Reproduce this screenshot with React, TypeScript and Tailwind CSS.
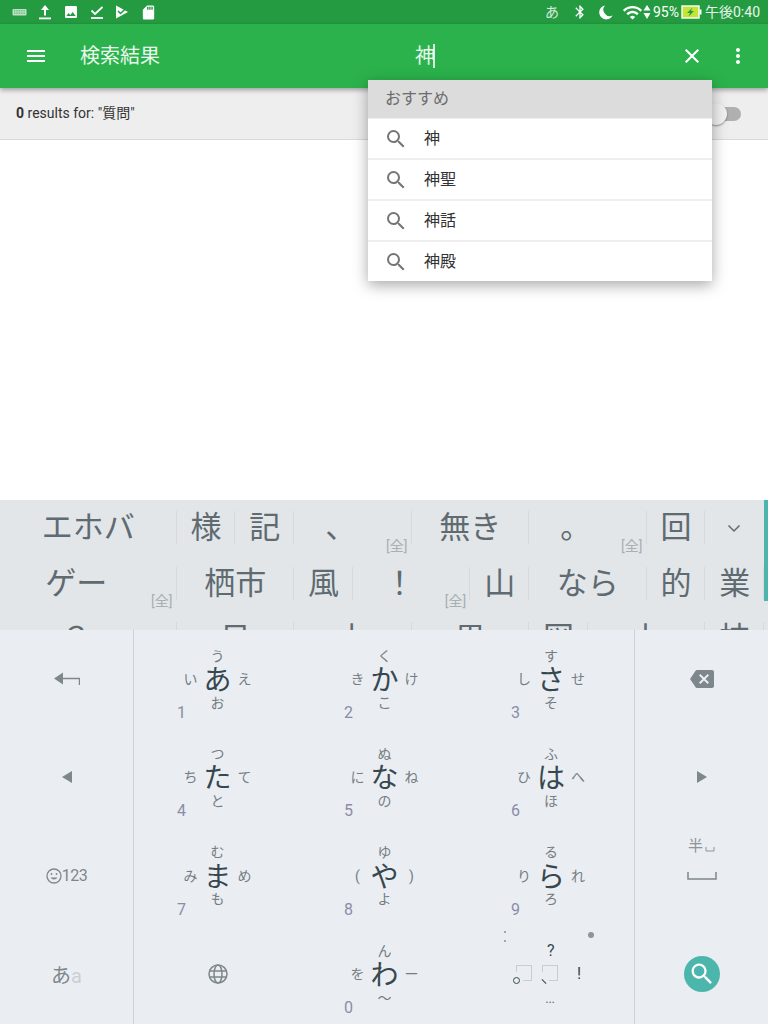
import type { ReactNode } from "react";

const SEARCH =
  "M15.5 14h-.79l-.28-.27A6.471 6.471 0 0 0 16 9.5 6.5 6.5 0 1 0 9.5 16c1.61 0 3.09-.59 4.23-1.57l.27.28v.79l5 4.99L20.49 19l-4.99-5zm-6 0C7.01 14 5 11.99 5 9.5S7.01 5 9.5 5 14 7.01 14 9.5 11.99 14 9.5 14z";

const Icon = ({ d, size, className }: { d: string; size: number; className?: string }) => (
  <svg width={size} height={size} viewBox="0 0 24 24" fill="currentColor" className={className}>
    <path d={d} />
  </svg>
);

const StatusBar = () => (
  <div className="flex h-6 shrink-0 items-center justify-between bg-[#249b41] pl-3 pr-2 text-white">
    <div className="flex items-center gap-[11px]">
      <svg width="15" height="12" viewBox="0 0 15 12" className="text-white/70" fill="currentColor">
        <rect x="0.5" y="3" width="14" height="6.5" rx="1" />
        <path d="M2 4.5h11M2 6h11M2 7.5h11" stroke="#249b41" strokeWidth="0.5" strokeDasharray="1 0.7" />
      </svg>
      <svg width="14" height="16" viewBox="0 0 14 16" fill="currentColor">
        <path d="M7 1 L11 6 H8 V11.5 H6 V6 H3 Z" />
        <rect x="1" y="13.5" width="12" height="1.8" />
      </svg>
      <Icon d="M21 19V5c0-1.1-.9-2-2-2H5c-1.1 0-2 .9-2 2v14c0 1.1.9 2 2 2h14c1.1 0 2-.9 2-2zM8.5 13.5l2.5 3.01L14.5 12l4.5 6H5l3.5-4.5z" size={16} />
      <svg width="14" height="16" viewBox="0 0 14 16" fill="none" stroke="currentColor" strokeWidth="1.8">
        <path d="M1.5 6.5 L5 10 L12.5 3" />
        <path d="M1 14 H13" />
      </svg>
      <svg width="14" height="16" viewBox="0 0 14 16" fill="currentColor">
        <path d="M1 1.5 L13 8 L1 14.5 Z" />
        <path d="M3 7 L5.5 9.5 L12 3.5" fill="none" stroke="#249b41" strokeWidth="1.5" />
      </svg>
      <Icon d="M18 2h-8L4.02 8 4 20c0 1.1.9 2 2 2h12c1.1 0 2-.9 2-2V4c0-1.1-.9-2-2-2zm-6 6h-2V4h2v4zm3 0h-2V4h2v4zm3 0h-2V4h2v4z" size={17} />
    </div>
    <div className="flex items-center">
      <span className="mr-[13px] text-[14px] text-white/80">あ</span>
      <Icon d="M17.71 7.71L12 2h-1v7.59L6.41 5 5 6.41 10.59 12 5 17.59 6.41 19 11 14.41V22h1l5.71-5.71-4.3-4.29 4.3-4.29zM13 5.83l1.88 1.88L13 9.59V5.83zm1.88 10.46L13 18.17v-3.76l1.88 1.88z" size={16} className="mr-[10px]" />
      <svg width="16" height="16" viewBox="0 0 16 16" fill="currentColor" className="mr-[8px]">
        <path d="M7 1.5 A7 7 0 1 0 14.5 11.5 A6.4 6.4 0 0 1 7 1.5 Z" />
      </svg>
      <Icon d="M1 9l2 2c4.97-4.97 13.03-4.97 18 0l2-2C16.93 2.93 7.08 2.93 1 9zm8 8l3 3 3-3c-1.65-1.66-4.34-1.66-6 0zm-4-4l2 2c2.76-2.76 7.24-2.76 10 0l2-2C15.14 9.14 8.87 9.14 5 13z" size={21} />
      <svg width="8" height="16" viewBox="0 0 8 16" fill="currentColor" className="mr-[2px]">
        <path d="M4 1 L7.5 6.5 H0.5 Z M4 15 L7.5 9 H0.5 Z" />
      </svg>
      <span className="mr-[2px] text-[14px] leading-none">95%</span>
      <svg width="21" height="14" viewBox="0 0 21 14" className="mr-[3px]">
        <rect x="1" y="1" width="17" height="12" fill="#c4e538" stroke="#fff" strokeWidth="1.4" />
        <rect x="18.5" y="4.5" width="2" height="5" fill="#fff" />
        <path d="M11.5 2.5 L6 8 H9 L7.5 11.5 L13 6 H10 Z" fill="#249b41" />
      </svg>
      <span className="text-[14px] leading-none text-white/90">午後0:40</span>
    </div>
  </div>
);

const AppBar = () => (
  <div className="relative z-10 flex h-16 shrink-0 items-center bg-[#2bb24c] text-white shadow-[0_2px_5px_rgba(0,0,0,0.35)]">
    <Icon d="M3 18h18v-2H3v2zm0-5h18v-2H3v2zm0-7v2h18V6H3z" size={24} className="ml-6" />
    <div className="ml-8 w-[335px] text-[20px] text-white/90">検索結果</div>
    <div className="flex flex-1 items-center text-[20px] text-white/90">
      <span>神</span>
      <div className="relative z-10 ml-[-2px] h-[24px] w-[2px] shrink-0 bg-white/80" />
    </div>
    <Icon d="M19 6.41L17.59 5 12 10.59 6.41 5 5 6.41 10.59 12 5 17.59 6.41 19 12 13.41 17.59 19 19 17.59 13.41 12z" size={24} className="mr-[22px]" />
    <Icon d="M12 8c1.1 0 2-.9 2-2s-.9-2-2-2-2 .9-2 2 .9 2 2 2zm0 2c-1.1 0-2 .9-2 2s.9 2 2 2 2-.9 2-2-.9-2-2-2zm0 6c-1.1 0-2 .9-2 2s.9 2 2 2 2-.9 2-2-.9-2-2-2z" size={24} className="mr-[18px]" />
  </div>
);

const SubHeader = () => (
  <div className="flex h-[52px] shrink-0 items-center justify-between border-b border-[#d9d9d9] bg-[#eeeeee] pl-4 pr-[27px] text-[14px] text-[#333]">
    <div>
      <span className="font-bold">0</span> results for: "質問"
    </div>
    <div className="relative h-[14px] w-[34px] rounded-full bg-[#b0b0b0]">
      <div className="absolute left-[-2px] top-[-4px] h-[22px] w-[22px] rounded-full bg-[#f1f1f1] shadow-[0_1px_2px_rgba(0,0,0,0.4)]" />
    </div>
  </div>
);

const Suggestions = () => (
  <div className="absolute left-[368px] top-20 z-20 w-[344px] bg-[#eeeeee] shadow-[0_4px_14px_rgba(0,0,0,0.35)]">
    <div className="flex h-[38px] items-center bg-[#dcdcdc] pl-[17px] text-[16px] text-[#6b6b6b]">おすすめ</div>
    <div className="flex flex-col gap-[2px] pt-px">
      {["神", "神聖", "神話", "神殿"].map((s) => (
        <div key={s} className="flex h-[39px] items-center bg-white text-[16px] text-[#333]">
          <Icon d={SEARCH} size={24} className="ml-4 text-[#757575]" />
          <span className="ml-4">{s}</span>
        </div>
      ))}
    </div>
  </div>
);

const Cand = ({ w, full, children }: { w: string; full?: boolean; children: ReactNode }) => (
  <div className={`relative flex h-[55.6px] shrink-0 items-center justify-center ${w} ${full ? "pr-6" : ""}`}>
    <span className="text-[31px] leading-none text-[#5f6b71]">{children}</span>
    <div className="absolute right-0 top-[11px] h-[33px] w-px bg-[#d5d9dc]" />
    {full && (
      <span className="absolute bottom-[3px] right-1 text-[14px] leading-none text-[#a9afb3]">[全]</span>
    )}
  </div>
);

const Candidates = () => (
  <div className="relative h-[130px] shrink-0 overflow-hidden bg-[#e2e6e9]">
    <div className="flex">
      <Cand w="w-[176.5px]">エホバ</Cand>
      <Cand w="w-[58.75px]">様</Cand>
      <Cand w="w-[58.75px]">記</Cand>
      <Cand w="w-[117.5px]" full>、</Cand>
      <Cand w="w-[117.5px]">無き</Cand>
      <Cand w="w-[117.5px]" full>。</Cand>
      <Cand w="w-[58.75px]">回</Cand>
      <div className="flex h-[55.6px] w-[58.75px] items-center justify-center pr-[2px] text-[#5f6b71]">
        <svg width="18" height="18" viewBox="0 0 18 18" fill="none" stroke="currentColor" strokeWidth="1.5">
          <path d="M3.5 6.5 L9 12 L14.5 6.5" />
        </svg>
      </div>
    </div>
    <div className="flex">
      <Cand w="w-[176.5px]" full>ゲー</Cand>
      <Cand w="w-[117.5px]">栖市</Cand>
      <Cand w="w-[58.75px]">風</Cand>
      <Cand w="w-[117.5px]" full>！</Cand>
      <Cand w="w-[58.75px]">山</Cand>
      <Cand w="w-[117.5px]">なら</Cand>
      <Cand w="w-[58.75px]">的</Cand>
      <Cand w="w-[58.75px]">業</Cand>
    </div>
    <div className="flex">
      <Cand w="w-[176.5px]" full>？</Cand>
      <Cand w="w-[117.5px]">日</Cand>
      <Cand w="w-[117.5px]">上</Cand>
      <Cand w="w-[117.5px]">男</Cand>
      <Cand w="w-[58.75px]">図</Cand>
      <Cand w="w-[117.5px]">上</Cand>
      <Cand w="w-[58.75px]">技</Cand>
    </div>
    <div className="absolute right-0 top-0 h-[101px] w-1 bg-[#4db6ac]" />
  </div>
);

type KeyProps = { main: string; top: string; left: string; right: string; bottom: string; num: string };

const Key = ({ main, top, left, right, bottom, num }: KeyProps) => (
  <div className="relative flex items-center justify-center">
    <div className="grid grid-cols-[27px_27px_27px] grid-rows-[21px_26px_21px] place-items-center text-[14px] leading-none text-[#757d82]">
      <span className="col-start-2">{top}</span>
      <span className="col-start-1 row-start-2">{left}</span>
      <span className="col-start-2 row-start-2 translate-y-[2px] text-[28px] leading-[26px] text-[#37474f]">{main}</span>
      <span className="col-start-3 row-start-2">{right}</span>
      <span className="col-start-2 row-start-3">{bottom}</span>
    </div>
    <span className="absolute left-[43px] top-[58px] font-['Roboto'] text-[16px] leading-5 text-[#8a8ca8]">{num}</span>
  </div>
);

const keyData: KeyProps[] = [
  { main: "あ", top: "う", left: "い", right: "え", bottom: "お", num: "1" },
  { main: "か", top: "く", left: "き", right: "け", bottom: "こ", num: "2" },
  { main: "さ", top: "す", left: "し", right: "せ", bottom: "そ", num: "3" },
  { main: "た", top: "つ", left: "ち", right: "て", bottom: "と", num: "4" },
  { main: "な", top: "ぬ", left: "に", right: "ね", bottom: "の", num: "5" },
  { main: "は", top: "ふ", left: "ひ", right: "へ", bottom: "ほ", num: "6" },
  { main: "ま", top: "む", left: "み", right: "め", bottom: "も", num: "7" },
  { main: "や", top: "ゆ", left: "(", right: ")", bottom: "よ", num: "8" },
  { main: "ら", top: "る", left: "り", right: "れ", bottom: "ろ", num: "9" },
];

const rowsCls = "grid grid-rows-[68px_68px_68px_68px] gap-y-[30.4px] py-[15px]";

const PunctBox = ({ className }: { className: string }) => (
  <div className={`absolute top-[25px] h-4 w-4 border-r border-t border-[#c9cdd1] ${className}`}>
    <div className="absolute bottom-0 right-0 h-px w-2 bg-[#c9cdd1]" />
    <div className="absolute left-0 top-0 h-[6px] w-px bg-[#c9cdd1]" />
  </div>
);

const PunctKey = () => (
  <div className="relative flex items-center justify-center text-[#37474f]">
    <div className="absolute left-9 top-[-9px] flex flex-col gap-[7px]">
      <div className="h-[2px] w-[2px] rounded-full bg-[#8a8f93]" />
      <div className="h-[2px] w-[2px] rounded-full bg-[#8a8f93]" />
    </div>
    <div className="absolute left-[120px] top-[-8px] h-[6px] w-[6px] rounded-full bg-[#8f9498]" />
    <span className="absolute left-[79px] top-px text-[16px] leading-5">?</span>
    <PunctBox className="left-12" />
    <PunctBox className="left-[74px]" />
    <span className="absolute left-[45px] top-[37px] h-[7px] w-[7px] rounded-full border border-[#37474f]" />
    <div className="absolute left-[73px] top-[41px] h-px w-[6px] rotate-45 bg-[#37474f]" />
    <span className="absolute left-[109px] top-6 text-[16px] leading-5">!</span>
    <span className="absolute left-[77px] top-12 text-[15px] leading-5 text-[#757d82]">…</span>
  </div>
);

const Keyboard = () => (
  <div className="grid h-[394px] shrink-0 grid-cols-[133px_502px_133px] bg-[#eaeef2]">
    <div className={rowsCls}>
      <div className="flex items-center justify-center text-[#7e878b]">
        <svg width="28" height="14" viewBox="0 0 28 14" fill="currentColor">
          <path d="M1 6.5 L10 0.5 V5.7 H27 V13 H25.8 V7.3 H10 V12.5 Z" />
        </svg>
      </div>
      <div className="flex items-center justify-center text-[#7e878b]">
        <svg width="10" height="12" viewBox="0 0 10 12" fill="currentColor"><path d="M10 0 V12 L0 6 Z" /></svg>
      </div>
      <div className="flex items-center justify-center font-['Roboto'] text-[16px] tracking-[-0.5px] text-[#7e878b]">
        <svg width="16" height="16" viewBox="0 0 16 16" fill="none" stroke="currentColor" strokeWidth="1.3">
          <circle cx="8" cy="8" r="7" />
          <circle cx="5.5" cy="6" r="0.9" fill="currentColor" stroke="none" />
          <circle cx="10.5" cy="6" r="0.9" fill="currentColor" stroke="none" />
          <path d="M4.5 9.5 C6 12 10 12 11.5 9.5 Z" fill="currentColor" stroke="none" />
        </svg>
        123
      </div>
      <div className="flex items-center justify-center pt-1 text-[20px] text-[#7e878b]">
        あ<span className="font-['Roboto'] text-[#ccd0d4]">a</span>
      </div>
    </div>

    <div className={`${rowsCls} grid-cols-[167px_167px_166px] border-x border-[#ced2d6]`}>
      {keyData.map((k) => (
        <Key key={k.main} {...k} />
      ))}
      <div className="flex items-center justify-center text-[#7e878b]">
        <svg width="20" height="20" viewBox="0 0 20 20" fill="none" stroke="currentColor" strokeWidth="1.5">
          <circle cx="10" cy="10" r="9" />
          <ellipse cx="10" cy="10" rx="4" ry="9" />
          <path d="M1.5 7 H18.5 M1.5 13 H18.5" />
        </svg>
      </div>
      <Key main="わ" top="ん" left="を" right="ー" bottom="〜" num="0" />
      <PunctKey />
    </div>

    <div className={rowsCls}>
      <div className="flex items-center justify-center text-[#7e878b]">
        <Icon d="M22 3H7c-.69 0-1.23.35-1.59.88L0 12l5.41 8.11c.36.53.9.89 1.59.89h15c1.1 0 2-.9 2-2V5c0-1.1-.9-2-2-2zm-3 12.59L17.59 17 14 13.41 10.41 17 9 15.59 12.59 12 9 8.41 10.41 7 14 10.59 17.59 7 19 8.41 15.41 12 19 15.59z" size={24} />
      </div>
      <div className="flex items-center justify-center text-[#7e878b]">
        <svg width="10" height="12" viewBox="0 0 10 12" fill="currentColor"><path d="M0 0 V12 L10 6 Z" /></svg>
      </div>
      <div className="flex -translate-y-[17px] flex-col items-center justify-center text-[#7e878b]">
        <div className="flex items-end text-[15px] leading-5 text-[#8d9498]">
          半
          <svg width="10" height="6" viewBox="0 0 10 6" fill="none" stroke="currentColor" className="mb-1 ml-[2px] shrink-0"><path d="M1 1 V5 H9 V1" /></svg>
        </div>
        <svg width="30" height="10" viewBox="0 0 30 10" fill="none" stroke="currentColor" strokeWidth="1.5" className="mt-[15px] shrink-0"><path d="M1 1 V8 H29 V1" /></svg>
      </div>
      <div className="flex items-center justify-center">
        <div className="flex h-9 w-9 items-center justify-center rounded-full bg-[#4db6ac] text-white">
          <Icon d={SEARCH} size={28} />
        </div>
      </div>
    </div>
  </div>
);

const App = () => {
  return (
    <div className="relative flex h-[1024px] w-[768px] flex-col overflow-hidden bg-white font-['Roboto','Noto_Sans_CJK_JP',sans-serif]">
      <StatusBar />
      <AppBar />
      <SubHeader />
      <div className="flex-1 bg-white" />
      <Suggestions />
      <Candidates />
      <Keyboard />
    </div>
  );
};

export default App;
